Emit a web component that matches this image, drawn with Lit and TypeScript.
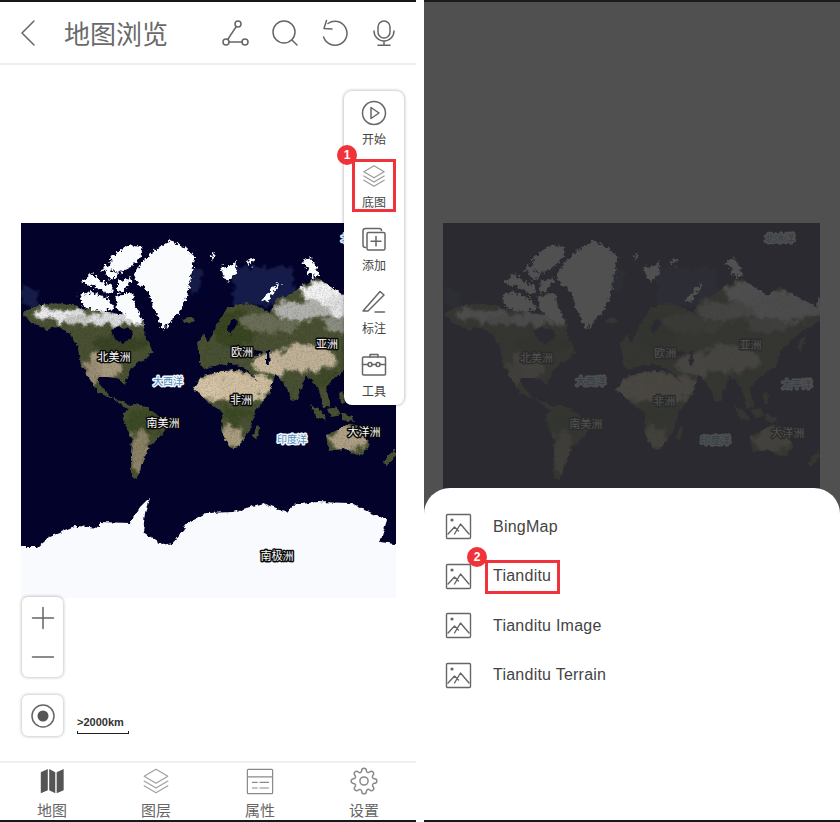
import { LitElement, html, svg, css } from "lit";
import { customElement } from "lit/decorators.js";

const poly = (pts: string, fill?: string) =>
  fill ? svg`<polygon points=${pts} fill=${fill}></polygon>` : svg`<polygon points=${pts}></polygon>`;

const LAND = [
  // North America
  "1,89 16,83 32,80 52,82 60,86 76,86 92,90 106,92 122,96 125,115 132,129 119,139 108,148 104,162 98,156 88,154 78,154 76,158 84,168 90,174 100,178 112,183 106,186 92,176 78,170 70,158 60,142 56,122 48,110 38,104 24,106 10,100",
  // South America
  "104,200 102,190 112,182 126,184 146,200 142,210 128,224 121,240 116,257 110,254 110,234 111,217",
  // Africa
  "172,165 180,154 200,148 222,147 240,160 250,170 234,187 230,204 217,224 210,226 200,207 202,190 187,179",
  // Eurasia
  "179,142 179,125 188,118 196,102 206,85 226,79 249,89 256,75 269,72 282,62 296,55 322,72 334,64 360,77 377,87 377,96 364,104 354,110 345,118 337,124 334,134 330,144 314,154 305,164 309,184 303,184 297,164 285,152 276,176 271,178 262,158 254,152 248,170 240,160 224,146 210,140 196,142 186,146",
  // Britain, Iceland, Japan
  "177,118 184,112 188,124 183,132 178,128",
  "162,96 170,93 174,98 166,101",
  "352,124 358,112 361,116 356,128",
  // Indonesia and Philippines
  "289,182 300,188 306,198 296,194",
  "306,186 316,184 320,192 310,194",
  "320,190 332,194 334,199 322,197",
  "318,170 322,168 324,180 320,180",
  // Australia, NZ, Madagascar
  "306,212 318,206 328,200 336,204 344,214 349,222 342,232 332,230 322,226 308,228",
  "362,240 368,232 374,226 374,232 366,242",
  "236,202 239,204 235,216 232,214",
  // Kamchatka
  "372,76 377,72 377,92 373,88",
];

const ARCTIC = [
  "112,55 120,40 130,30 149,17 164,25 174,34 169,59 162,85 142,107 134,89 127,69",
  "89,35 106,22 122,24 119,35 108,46 96,50 90,44",
  "61,59 71,50 79,57 89,62 94,67 86,70 74,64",
  "81,44 89,42 96,54 89,57",
  "57,72 69,69 86,75 94,85 79,88 64,85",
  "94,72 112,70 114,82 122,99 112,100 102,90 96,85",
  "96,59 111,55 104,67 96,69",
  "199,44 214,42 216,50 206,60",
  "282,38 290,35 299,52 290,54",
  "242,76 250,66 258,59 259,62 252,70 246,80",
  "190,32 194,30 192,38",
  "212,40 216,38 215,44",
  "226,38 232,36 230,44",
];

const MAP_LABELS: [string, number, number, string][] = [
  ["北美洲", 93, 133, "lbl"],
  ["大西洋", 147, 157, "sea"],
  ["欧洲", 221, 128, "lbl"],
  ["亚洲", 306, 120, "lbl"],
  ["非洲", 220, 176, "lbl"],
  ["南美洲", 142, 199, "lbl"],
  ["印度洋", 271, 215, "sea"],
  ["大洋洲", 343, 208, "lbl"],
  ["南极洲", 256, 332, "lbl"],
  ["太平洋", 352, 160, "sea"],
  ["北冰洋", 335, 14, "sea"],
];

const worldMap = (covered: string[] = []) => svg`
  <svg class="world" viewBox="0 0 375 375" preserveAspectRatio="none">
    <defs>
      <filter id="rough" x="-5%" y="-5%" width="110%" height="110%">
        <feTurbulence type="fractalNoise" baseFrequency="0.2" numOctaves="3" seed="4" result="n"></feTurbulence>
        <feDisplacementMap in="SourceGraphic" in2="n" scale="5" xChannelSelector="R" yChannelSelector="G"></feDisplacementMap>
      </filter>
      <filter id="jag" x="-5%" y="-5%" width="110%" height="110%">
        <feTurbulence type="fractalNoise" baseFrequency="0.28" numOctaves="3" seed="7" result="n"></feTurbulence>
        <feDisplacementMap in="SourceGraphic" in2="n" scale="8" xChannelSelector="R" yChannelSelector="G"></feDisplacementMap>
      </filter>
      <filter id="soft" x="-30%" y="-30%" width="160%" height="160%">
        <feTurbulence type="fractalNoise" baseFrequency="0.11" numOctaves="4" seed="9" result="n"></feTurbulence>
        <feDisplacementMap in="SourceGraphic" in2="n" scale="16" result="d"></feDisplacementMap>
        <feGaussianBlur in="d" stdDeviation="1.1"></feGaussianBlur>
      </filter>
      <filter id="grain" x="0" y="0" width="100%" height="100%">
        <feTurbulence type="fractalNoise" baseFrequency="0.7" numOctaves="2" seed="3"></feTurbulence>
        <feColorMatrix type="matrix" values="0 0 0 0 0  0 0 0 0 0  0 0 0 0 0  2.2 0 0 0 -0.85"></feColorMatrix>
      </filter>
      <clipPath id="landClip">${LAND.map((p) => poly(p))}</clipPath>
    </defs>
    <rect width="375" height="375" fill="#02022b"></rect>

    <g fill="#141c48" filter="url(#soft)">
      <rect x="1" y="64" width="16" height="18"></rect>
      <rect x="212" y="44" width="60" height="38"></rect>
      <rect x="170" y="44" width="10" height="28"></rect>
    </g>

    <g filter="url(#rough)">
      <g clip-path="url(#landClip)">
        <rect width="375" height="375" fill="#4a5233"></rect>
        <g filter="url(#soft)">
          <ellipse cx="85" cy="143" rx="17" ry="13" fill="#a89c80"></ellipse>
          <ellipse cx="72" cy="150" rx="9" ry="13" fill="#9c8f74"></ellipse>
          <ellipse cx="100" cy="120" rx="30" ry="9" fill="#3a4526"></ellipse>
          <ellipse cx="122" cy="200" rx="18" ry="13" fill="#3d4b25"></ellipse>
          <ellipse cx="119" cy="228" rx="10" ry="22" fill="#8d8468"></ellipse>
          <ellipse cx="212" cy="163" rx="42" ry="14" fill="#d4c2a4"></ellipse>
          <ellipse cx="188" cy="166" rx="13" ry="10" fill="#d8c6a8"></ellipse>
          <ellipse cx="214" cy="191" rx="20" ry="7" fill="#3d4b25"></ellipse>
          <ellipse cx="212" cy="214" rx="13" ry="11" fill="#ac9e80"></ellipse>
          <ellipse cx="254" cy="140" rx="22" ry="12" fill="#cbbb9f"></ellipse>
          <ellipse cx="284" cy="136" rx="30" ry="13" fill="#c2b49a"></ellipse>
          <ellipse cx="252" cy="164" rx="9" ry="6" fill="#cbbb9f"></ellipse>
          <ellipse cx="214" cy="106" rx="22" ry="20" fill="#3a4724"></ellipse>
          <ellipse cx="250" cy="100" rx="30" ry="9" fill="#6c7058"></ellipse>
          <ellipse cx="305" cy="156" rx="16" ry="9" fill="#3f4c2a"></ellipse>
          <ellipse cx="328" cy="216" rx="20" ry="12" fill="#b0a286"></ellipse>
          <ellipse cx="38" cy="91" rx="26" ry="7" fill="#eeeef0"></ellipse>
          <ellipse cx="92" cy="96" rx="34" ry="7" fill="#e0e0e2"></ellipse>
          <ellipse cx="58" cy="98" rx="14" ry="6" fill="#cacac8"></ellipse>
          <ellipse cx="305" cy="68" rx="26" ry="13" fill="#f4f4f4"></ellipse>
          <ellipse cx="342" cy="84" rx="42" ry="15" fill="#e6e6e6"></ellipse>
          <ellipse cx="282" cy="88" rx="28" ry="10" fill="#b4b4b0"></ellipse>
          <ellipse cx="322" cy="102" rx="20" ry="7" fill="#8f9084"></ellipse>
        </g>
        <rect width="375" height="375" filter="url(#grain)" opacity="0.16"></rect>
      </g>
      <g fill="#02022b">
        ${poly("90,106 100,104 112,107 110,116 102,120 92,114")}
        ${poly("206,104 212,96 216,100 210,112")}
        ${poly("232,128 240,127 241,131 233,132")}
        ${poly("245,128 248,128 249,142 245,141")}
      </g>
      ${poly(
        "-6,324 17,324 29,314 56,303 79,305 79,299 109,300 119,284 129,274 124,290 122,309 142,322 152,320 167,300 186,290 212,289 242,280 266,289 272,282 296,279 329,280 366,297 359,319 381,322 381,381 -6,381",
        "#f9fafd"
      )}
    </g>
    <g fill="#fafbfc" filter="url(#jag)">${ARCTIC.map((p) => poly(p))}</g>

    ${MAP_LABELS.filter(([t]) => !covered.includes(t)).map(
      ([t, x, y, c]) => svg`<text class=${c} x=${x} y=${y} text-anchor="middle" dominant-baseline="central">${t}</text>`
    )}
  </svg>
`;

const imageIcon = html`<svg class="pic" viewBox="0 0 27 27">
  <rect x="1.5" y="1.5" width="24" height="24" rx="1"></rect>
  <circle class="solid" cx="7" cy="7" r="1.6"></circle>
  <path d="M3 21l6.5-7 4 4M9.5 21l6-10 8.5 10"></path>
</svg>`;

const layersPath = svg`<path d="M13 2L24 8.5 13 15 2 8.5z"></path><path d="M2 13l11 6.5L24 13"></path><path d="M2 17.5L13 24l11-6.5"></path>`;

@customElement("app-root")
export class AppRoot extends LitElement {
  static styles = css`
    :host {
      display: grid;
      grid-template-columns: 416px 424px;
      width: 840px;
      height: 822px;
      overflow: hidden;
      background: #fff;
      font-family: "Noto Sans CJK SC", "Liberation Sans", sans-serif;
      color: #555;
    }
    svg { display: block; fill: none; stroke: #666; stroke-width: 1.5; stroke-linecap: round; stroke-linejoin: round; }
    .solid { fill: #666; stroke: none; }

    .phone {
      display: flex;
      flex-direction: column;
      height: 822px;
      box-sizing: border-box;
      border-top: 2px solid #15171a;
      border-bottom: 2px solid #15171a;
      overflow: hidden;
    }
    .top {
      display: flex;
      align-items: center;
      height: 63px;
      flex: none;
      box-sizing: border-box;
      border-bottom: 2px solid #eeeeee;
      padding: 0 17px 0 20px;
    }
    .back { width: 16px; height: 28px; }
    .top h1 {
      margin: 0 0 0 28px;
      font-size: 26px;
      font-weight: 400;
      color: #6a6a6a;
      line-height: 1;
    }
    .tools { margin-left: auto; display: flex; gap: 22px; }
    .tools svg { width: 28px; height: 28px; }

    .stage {
      flex: 1;
      position: relative;
      padding: 158px 0 0 21px;
      min-height: 0;
    }
    .world { width: 375px; height: 375px; stroke: none; }
    .world text { font-size: 11px; font-family: "Noto Sans CJK SC", sans-serif; paint-order: stroke; stroke-linejoin: round; }
    .world .lbl { fill: #fff; stroke: #0b0b0b; stroke-width: 3px; }
    .world .sea { fill: #4c8cc0; stroke: #f2f6fa; stroke-width: 3px; font-size: 10px; }

    .float {
      position: absolute;
      left: 344px;
      top: 26px;
      width: 60px;
      box-sizing: border-box;
      background: #fff;
      border-radius: 8px;
      box-shadow: 0 0 3px 1px rgba(0, 0, 0, 0.22);
      padding: 9px 0 6px;
      display: flex;
      flex-direction: column;
      gap: 16px;
    }
    .fi { display: flex; flex-direction: column; align-items: center; gap: 5px; }
    .fi svg { width: 26px; height: 26px; }
    .fi span { font-size: 12px; line-height: 16px; color: #444; }
    .fi svg.light { stroke: #9a9a9a; stroke-width: 1.3; width: 24px; height: 24px; margin: 1px 0; }
    .mark {
      position: absolute;
      box-sizing: border-box;
      border: 3px solid #f0323a;
    }
    .mark.one { left: 8px; top: 68px; width: 44px; height: 53px; }
    .badge {
      position: absolute;
      width: 20px;
      height: 20px;
      border-radius: 50%;
      background: #f0323a;
      color: #fff;
      font: 700 12px/20px "Liberation Sans", sans-serif;
      text-align: center;
    }
    .badge.one { left: -7px; top: 54px; }

    .zoombox, .locate {
      position: absolute;
      left: 22px;
      width: 41px;
      box-sizing: border-box;
      background: #fff;
      border-radius: 6px;
      box-shadow: 0 0 3px 1px rgba(0, 0, 0, 0.2);
      display: flex;
      align-items: center;
      justify-content: center;
    }
    .zoombox { top: 532px; height: 80px; flex-direction: column; gap: 15px; }
    .zoombox svg { width: 24px; height: 24px; }
    .locate { top: 630px; height: 41px; }
    .locate svg { width: 26px; height: 26px; }
    .locate .dot { fill: #555; stroke: none; }
    .scale { position: absolute; left: 77px; top: 650px; width: 52px; }
    .scale span { display: block; font: 700 11px/14px "Liberation Sans", sans-serif; color: #333; white-space: nowrap; }
    .scale i {
      display: block;
      height: 3px;
      margin-top: 2px;
      border: 1px solid #222;
      border-top: 0;
      box-sizing: border-box;
    }

    .tabs {
      flex: none;
      height: 59px;
      box-sizing: border-box;
      border-top: 2px solid #eff0f2;
      display: flex;
      overflow: hidden;
    }
    .tab { flex: 1; display: flex; flex-direction: column; align-items: center; padding-top: 4px; }
    .tab svg { width: 30px; height: 30px; stroke: #8a8a8a; stroke-width: 1.3; }
    .tab svg.thin { stroke: #a0a0a0; stroke-width: 1.1; }
    .tab span { font-size: 15px; line-height: 20px; margin-top: 5px; color: #666; white-space: nowrap; }
    .tab svg.filled { fill: #555; stroke: none; }

    .gutter { padding-left: 8px; }
    .dim {
      position: relative;
      height: 822px;
      box-sizing: border-box;
      border-top: 2px solid #1a1c1a;
      border-bottom: 2px solid #15171a;
      background: #fff;
      padding: 221px 0 0 19px;
      overflow: hidden;
    }
    .dim .world { width: 377px; height: 377px; }
    .scrim { position: absolute; inset: 0; background: rgba(49, 49, 49, 0.85); }
    .sheet {
      position: absolute;
      left: 0;
      right: 0;
      top: 486px;
      bottom: 0;
      background: #fff;
      border-radius: 26px 26px 0 0;
      padding: 14px 0 0 21px;
    }
    .row { display: flex; align-items: center; gap: 21px; height: 49.5px; }
    .pic { width: 27px; height: 27px; flex: none; stroke-width: 1.4; }
    .row span { font: 400 16px/20px "Liberation Sans", sans-serif; color: #444; letter-spacing: 0.015em; }
    .mark.two { left: 61px; top: 72px; width: 75px; height: 34px; }
    .badge.two { left: 43px; top: 59px; }
  `;

  render() {
    const rows = ["BingMap", "Tianditu", "Tianditu Image", "Tianditu Terrain"];
    return html`
      <section class="phone">
        <header class="top">
          <svg class="back" viewBox="0 0 16 28"><path d="M14 2L2 14l12 12"></path></svg>
          <h1>地图浏览</h1>
          <div class="tools">
            <svg viewBox="0 0 28 28">
              <circle cx="17" cy="5" r="3"></circle><circle cx="5" cy="23" r="3"></circle><circle cx="24" cy="23" r="3"></circle>
              <path d="M15.3 7.5L6.7 20.5M8 23h13"></path>
            </svg>
            <svg viewBox="0 0 28 28"><circle cx="13" cy="13" r="11"></circle><path d="M21 21l5 5"></path></svg>
            <svg viewBox="0 0 28 28">
              <path d="M7 4.500A12 12 0 1 1 2.600 18"></path><path d="M5.500 1.500L3 9.500l8 .5"></path>
            </svg>
            <svg viewBox="0 0 28 28">
              <rect x="7" y="2" width="12" height="17" rx="6"></rect>
              <path d="M3 12a10 10 0 0 0 20 0M13 22v4M7 26.300h12"></path>
            </svg>
          </div>
        </header>

        <main class="stage">
          ${worldMap(["太平洋"])}
          <div class="float">
            <div class="fi">
              <svg viewBox="0 0 26 26"><circle cx="13" cy="13" r="11.500"></circle><path d="M10 7.500v11l8-5.500z"></path></svg>
              <span>开始</span>
            </div>
            <div class="fi">
              <svg class="light" viewBox="0 0 26 26">${layersPath}</svg>
              <span>底图</span>
            </div>
            <div class="fi">
              <svg viewBox="0 0 26 26">
                <path d="M4.500 21.500Q2 21.500 2 19V5q0-2.500 2.500-2.500H18q2.500 0 2.500 2"></path>
                <rect x="6" y="6.500" width="18" height="17.500" rx="1.500"></rect>
                <path d="M15 10.500v9.500M10 15.200h10"></path>
              </svg>
              <span>添加</span>
            </div>
            <div class="fi">
              <svg viewBox="0 0 26 26"><path d="M2 22L19 2.500l4 3.500L7 22zM14 23h9.500"></path></svg>
              <span>标注</span>
            </div>
            <div class="fi">
              <svg viewBox="0 0 26 26">
                <rect x="1.500" y="5" width="23" height="18" rx="1"></rect>
                <path d="M9 5V2.500h8V5M1.500 12.500H7M11 12.500h4M19 12.500h5.500"></path>
                <circle cx="9" cy="12.500" r="2"></circle><circle cx="17" cy="12.500" r="2"></circle>
              </svg>
              <span>工具</span>
            </div>
            <div class="mark one"></div>
            <div class="badge one">1</div>
          </div>

          <div class="zoombox">
            <svg viewBox="0 0 24 24"><path d="M12 1.500v21M1.500 12h21"></path></svg>
            <svg viewBox="0 0 24 24"><path d="M1.500 12h21"></path></svg>
          </div>
          <div class="locate">
            <svg viewBox="0 0 26 26"><circle cx="13" cy="13" r="11"></circle><circle class="dot" cx="13" cy="13" r="5.500"></circle></svg>
          </div>
          <div class="scale"><span>&gt;2000km</span><i></i></div>
        </main>

        <nav class="tabs">
          <div class="tab">
            <svg class="filled" viewBox="0 0 30 30">
              <path d="M3 5.500L10.500 2.200V25L3 28zM12 2.200L18.500 5.500V28L12 25zM20 5.500L27.500 2.200V25L20 28z"></path>
            </svg>
            <span>地图</span>
          </div>
          <div class="tab">
            <svg class="thin" viewBox="0 0 26 26">${layersPath}</svg>
            <span>图层</span>
          </div>
          <div class="tab">
            <svg viewBox="0 0 30 30">
              <rect x="1.500" y="2.500" width="27" height="26" rx="1"></rect>
              <path d="M1.500 10.500h27M7 16.500h5M15 16.500h9M7 22.500h5M15 22.500h9"></path>
            </svg>
            <span>属性</span>
          </div>
          <div class="tab">
            <svg viewBox="0 0 24 24">
              <circle cx="12" cy="12" r="3.500"></circle>
              <path d="M19.400 15a1.650 1.650 0 0 0 .33 1.820l.06.06a2 2 0 0 1 0 2.830 2 2 0 0 1-2.830 0l-.06-.06a1.650 1.650 0 0 0-1.820-.33 1.650 1.650 0 0 0-1 1.510V21a2 2 0 0 1-2 2 2 2 0 0 1-2-2v-.09A1.650 1.650 0 0 0 9 19.400a1.650 1.650 0 0 0-1.820.33l-.06.06a2 2 0 0 1-2.830 0 2 2 0 0 1 0-2.830l.06-.06a1.650 1.650 0 0 0 .33-1.820 1.650 1.650 0 0 0-1.510-1H3a2 2 0 0 1-2-2 2 2 0 0 1 2-2h.09A1.650 1.650 0 0 0 4.600 9a1.650 1.650 0 0 0-.33-1.820l-.06-.06a2 2 0 0 1 0-2.830 2 2 0 0 1 2.830 0l.06.06a1.650 1.650 0 0 0 1.820.33H9a1.650 1.650 0 0 0 1-1.510V3a2 2 0 0 1 2-2 2 2 0 0 1 2 2v.09a1.650 1.650 0 0 0 1 1.510 1.650 1.650 0 0 0 1.820-.33l.06-.06a2 2 0 0 1 2.830 0 2 2 0 0 1 0 2.830l-.06.06a1.650 1.650 0 0 0-.33 1.820V9a1.650 1.650 0 0 0 1.510 1H21a2 2 0 0 1 2 2 2 2 0 0 1-2 2h-.09a1.650 1.650 0 0 0-1.510 1z"></path>
            </svg>
            <span>设置</span>
          </div>
        </nav>
      </section>

      <div class="gutter">
        <section class="dim">
          ${worldMap()}
          <div class="scrim"></div>
          <div class="sheet">
            ${rows.map((r) => html`<div class="row">${imageIcon}<span>${r}</span></div>`)}
            <div class="mark two"></div>
            <div class="badge two">2</div>
          </div>
        </section>
      </div>
    `;
  }
}
